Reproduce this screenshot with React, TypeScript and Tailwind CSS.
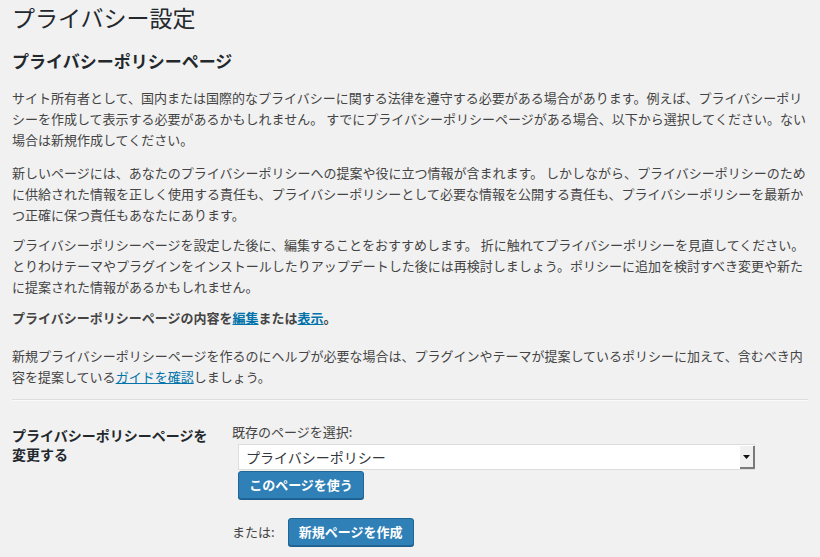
const font = { fontFamily: '"Noto Sans CJK JP", "Noto Sans", sans-serif' };

function Select() {
  return (
    <div className="relative flex h-[26px] w-[517px] items-center border border-[#dddddd] bg-white">
      <span className="pl-[7px] text-[14px] text-[#32373c]">プライバシーポリシー</span>
      <span className="absolute right-[-1px] top-[1px] flex h-[23px] w-[15px] items-center justify-center border-b-2 border-r-2 border-[#7a7a7a] bg-[#f0f0f0]">
        <svg width="7" height="4" viewBox="0 0 7 4">
          <path d="M0 0h7L3.5 4z" fill="#111" />
        </svg>
      </span>
    </div>
  );
}

function PrimaryButton({ children }: { children: string }) {
  return (
    <button className="h-[28px] w-[126px] rounded-[3px] border border-[#1f6596] bg-[#2f80b7] text-[13px] font-bold text-white shadow-[0_1px_0_#1d5f8e]">
      {children}
    </button>
  );
}

export default function App() {
  return (
    <div className="min-h-[557px] bg-[#f1f1f1] text-[#444444]" style={font}>
      <div className="mx-[12px]">
        <h1 className="pt-[2px] pb-[4px] text-[23px] font-normal leading-[30px] text-[#23282d]">
          プライバシー設定
        </h1>
        <h2 className="mt-[14px] mb-[10px] text-[17px] font-bold leading-[22px] text-[#23282d]">
          プライバシーポリシーページ
        </h2>
        <div className="text-[13px] leading-[21px]">
          <p className="mt-[15px] mb-[12px]">
            サイト所有者として、国内または国際的なプライバシーに関する法律を遵守する必要がある場合があります。例えば、プライバシーポリシーを作成して表示する必要があるかもしれません。 すでにプライバシーポリシーページがある場合、以下から選択してください。ない場合は新規作成してください。
          </p>
          <p className="mt-[12px] mb-[9px]">
            新しいページには、あなたのプライバシーポリシーへの提案や役に立つ情報が含まれます。 しかしながら、プライバシーポリシーのために供給された情報を正しく使用する責任も、プライバシーポリシーとして必要な情報を公開する責任も、プライバシーポリシーを最新かつ正確に保つ責任もあなたにあります。
          </p>
          <p className="mt-[9px] mb-[10px]">
            プライバシーポリシーページを設定した後に、編集することをおすすめします。 折に触れてプライバシーポリシーを見直してください。 とりわけテーマやプラグインをインストールしたりアップデートした後には再検討しましょう。ポリシーに追加を検討すべき変更や新たに提案された情報があるかもしれません。
          </p>
          <p className="my-[10px] font-bold">
            プライバシーポリシーページの内容を
            <a className="text-[#0073aa] underline">編集</a>
            または
            <a className="text-[#0073aa] underline">表示</a>。
          </p>
          <p className="mt-[17px] mb-[12px]">
            新規プライバシーポリシーページを作るのにヘルプが必要な場合は、プラグインやテーマが提案しているポリシーに加えて、含むべき内容を提案している
            <a className="text-[#0073aa] underline">ガイドを確認</a>
            しましょう。
          </p>
        </div>
        <hr className="mt-[10px] border-t border-[#dddddd] border-b border-b-[#fafafa]" />
        <div className="flex pt-[20px]">
          <div className="w-[220px] shrink-0 pt-[5px] pr-[10px] text-[14px] font-bold leading-[19px] text-[#23282d]">
            プライバシーポリシーページを
            <br />
            変更する
          </div>
          <div className="flex flex-col">
            <span className="text-[13px] leading-[21px]">既存のページを選択:</span>
            <div className="ml-[6px] mt-[2px] flex flex-col gap-[1px]">
              <Select />
              <div>
                <PrimaryButton>このページを使う</PrimaryButton>
              </div>
            </div>
            <div className="mt-[19px] flex items-center gap-[13px]">
              <span className="text-[13px]">または:</span>
              <PrimaryButton>新規ページを作成</PrimaryButton>
            </div>
          </div>
        </div>
      </div>
    </div>
  );
}
